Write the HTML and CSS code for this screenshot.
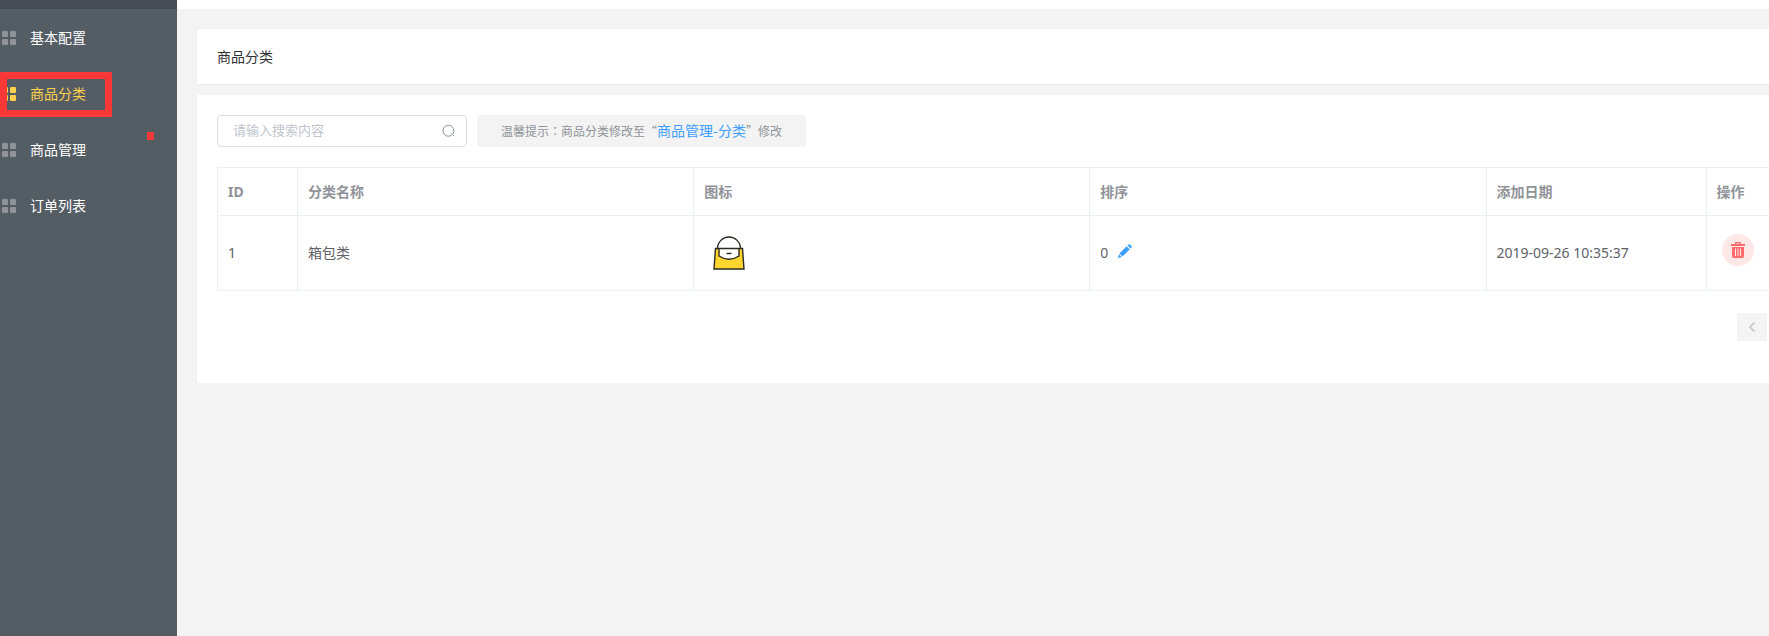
FILE: index.html
```html
<!DOCTYPE html>
<html lang="zh-CN">
<head>
<meta charset="utf-8">
<title>商品分类</title>
<link rel="stylesheet" href="styles.css">
</head>
<body>
<svg class="defs" aria-hidden="true">
  <symbol id="grid" viewBox="0 0 14 14"><path fill="currentColor" d="M1 0h4q1 0 1 1v4q0 1-1 1H1Q0 6 0 5V1q0-1 1-1zM9 0h4q1 0 1 1v4q0 1-1 1H9Q8 6 8 5V1q0-1 1-1zM1 8h4q1 0 1 1v4q0 1-1 1H1q-1 0-1-1V9q0-1 1-1zM9 8h4q1 0 1 1v4q0 1-1 1H9q-1 0-1-1V9q0-1 1-1z"/></symbol>
</svg>
<div class="app">
  <aside class="sidebar">
    <div class="sidebar-top"></div>
    <nav class="menu">
      <a class="menu-item" href="#"><svg class="menu-icon"><use href="#grid"/></svg>基本配置</a>
      <a class="menu-item active" href="#"><svg class="menu-icon"><use href="#grid"/></svg>商品分类<span class="highlight"></span></a>
      <a class="menu-item" href="#"><svg class="menu-icon"><use href="#grid"/></svg>商品管理<span class="marker"></span></a>
      <a class="menu-item" href="#"><svg class="menu-icon"><use href="#grid"/></svg>订单列表</a>
    </nav>
  </aside>
  <div class="page">
    <header class="topbar"></header>
    <main class="content">
      <h1 class="title">商品分类</h1>
      <section class="panel">
        <div class="toolbar">
          <div class="search">
            <input class="search-input" type="text" placeholder="请输入搜索内容" aria-label="请输入搜索内容">
            <button class="search-button" type="button" aria-label="搜索">
              <svg width="14" height="14" viewBox="0 0 14 14" fill="none" stroke="currentColor"><path d="M9.500 11.300A5.500 5.500 0 1 1 11 9.800M9.200 9.200l3 3"/></svg>
            </button>
          </div>
          <p class="tip">温馨提示<span class="colon" lang="zh-TW">：</span>商品分类修改至“<a class="tip-link" href="#">商品管理-分类</a>”修改</p>
        </div>
        <table class="table">
          <colgroup><col class="col-id"><col><col><col><col class="col-date"><col class="col-action"></colgroup>
          <thead>
            <tr><th>ID</th><th>分类名称</th><th>图标</th><th>排序</th><th>添加日期</th><th>操作</th></tr>
          </thead>
          <tbody>
            <tr>
              <td>1</td>
              <td>箱包类</td>
              <td>
                <svg class="bag" viewBox="0 0 50 50" role="img" aria-label="箱包">
                  <path d="M11.500 20.500h27L40 41H10z" fill="#ffd52e"/>
                  <path d="M15 20.500h20V28q-10 6.500-20 0z" fill="#fff"/>
                  <g fill="none" stroke="#2b2a20" stroke-width="1.400"><path d="M11.500 20.500h27L40 41H10zM15 20.500V28q10 6.500 20 0v-7.500M13.500 20.500a11.500 11.500 0 0 1 23 0"/><path d="M22.500 25.500h5"/></g>
                </svg>
              </td>
              <td>
                <div class="sort">0
                  <button class="edit" type="button" aria-label="编辑"><svg width="14" height="14" viewBox="0 0 14 14" fill="currentColor"><path d="M8.600 2.300l3.100 3.100-7.200 7.100-3.100-3.100zM9.500 1.500L10.600.400q.6-.6 1.200 0L13.600 2.200q.6.600 0 1.200L12.500 4.500zM.9 10.200L3.700 13 0 14z"/></svg></button>
                </div>
              </td>
              <td>2019-09-26 10:35:37</td>
              <td>
                <button class="delete" type="button" aria-label="删除"><svg width="14" height="16" viewBox="0 0 14 16"><path fill="currentColor" fill-rule="evenodd" d="M4 2V1q0-1 1-1h4q1 0 1 1v1h4v2H0V2zM5.300 2h3.400V1.200H5.300zM1 5h12v9q0 2-2 2H3q-2 0-2-2zM4 6.500V14h1V6.500zM6.500 6.500V14h1V6.500zM9 6.500V14h1V6.500z"/></svg></button>
              </td>
            </tr>
          </tbody>
        </table>
        <div class="pagination">
          <button class="prev" type="button" aria-label="上一页" disabled><svg width="8" height="10" viewBox="0 0 8 10" fill="none" stroke="currentColor" stroke-width="1.500"><path d="M6.500.5L2 5l4.500 4.500"/></svg></button>
        </div>
      </section>
    </main>
  </div>
</div>
</body>
</html>
```
FILE: styles.css
```css
* { box-sizing: border-box; }

body {
  margin: 0;
  background: #f3f3f3;
  color: #606266;
  font: 14px/20px "Noto Sans", "Noto Sans CJK SC", sans-serif;
}

button {
  display: inline-flex;
  align-items: center;
  justify-content: center;
  padding: 0;
  border: 0;
  background: none;
}

a { text-decoration: none; }

.defs { display: none; }

.app {
  display: flex;
  min-height: 100vh;
}

.sidebar {
  flex: none;
  width: 177px;
  background: #545c64;
}

.sidebar-top {
  height: 9px;
  background: #454c54;
}

.menu { padding-top: 1px; }

.menu-item {
  position: relative;
  display: flex;
  align-items: center;
  gap: 14px;
  height: 56px;
  padding-left: 2px;
  color: #fff;
}

.menu-icon {
  width: 14px;
  height: 14px;
  color: #909399;
}

.active,
.active .menu-icon { color: #ffd04b; }

.highlight {
  position: absolute;
  top: 6px;
  left: 0;
  width: 112px;
  height: 45px;
  border: 7px solid #fb3838;
}

.marker {
  position: absolute;
  top: 10px;
  right: 23px;
  width: 7px;
  height: 8px;
  background: #fb3838;
}

.page {
  flex: 1;
  min-width: 0;
}

.topbar {
  height: 9px;
  background: #fff;
}

.content {
  display: grid;
  gap: 10px;
  padding: 20px 0 20px 20px;
}

.title {
  margin: 0;
  padding: 18px 20px 17px;
  border-bottom: 1px solid #e6ebf5;
  border-top-left-radius: 4px;
  background: #fff;
  color: #303133;
  font-size: 14px;
  font-weight: 400;
}

.panel {
  padding: 20px 0 42px 20px;
  background: #fff;
}

.toolbar {
  display: flex;
  gap: 10px;
  height: 32px;
  margin-bottom: 20px;
}

.search {
  display: flex;
  width: 250px;
  border: 1px solid #dcdfe6;
  border-radius: 4px;
}

.search-input {
  flex: 1;
  min-width: 0;
  padding: 0 0 2px 15px;
  border: 0;
  outline: 0;
  background: none;
  font: 13px/20px "Noto Sans", "Noto Sans CJK SC", sans-serif;
}

.search-input::placeholder { color: #c0c4cc; }

.search-button {
  width: 34px;
  color: #909399;
}

.tip {
  margin: 0;
  padding: 0 24px;
  border-radius: 4px;
  background: #f3f3f3;
  color: #909399;
  font: 12px/30px "Noto Sans CJK SC", sans-serif;
}

.colon { font-family: "Noto Sans CJK TC", sans-serif; }

.tip-link {
  color: #409eff;
  font-size: 14px;
}

.table {
  width: 100%;
  table-layout: fixed;
  border-collapse: collapse;
  border-top: 1px solid #ebeef5;
}

.col-id { width: 80px; }
.col-date { width: 220px; }
.col-action { width: 63px; }

.table th,
.table td {
  padding: 12px 0 12px 10px;
  border-left: 1px solid #ebeef5;
  border-bottom: 1px solid #ebeef5;
  text-align: left;
}

.table th {
  height: 48px;
  color: #909399;
}

.bag {
  display: block;
  width: 50px;
  height: 50px;
}

.sort {
  display: flex;
  align-items: center;
  gap: 10px;
}

.edit {
  padding-bottom: 4px;
  color: #409eff;
}

.delete {
  width: 32px;
  height: 32px;
  margin: 0 0 6px 5px;
  border-radius: 50%;
  background: #fee7e7;
  color: #ff6b6b;
}

.pagination {
  display: flex;
  justify-content: flex-end;
  padding: 22px 2px 0 0;
}

.prev {
  width: 30px;
  height: 28px;
  border-radius: 2px;
  background: #f4f4f5;
  color: #c0c4cc;
}
```
